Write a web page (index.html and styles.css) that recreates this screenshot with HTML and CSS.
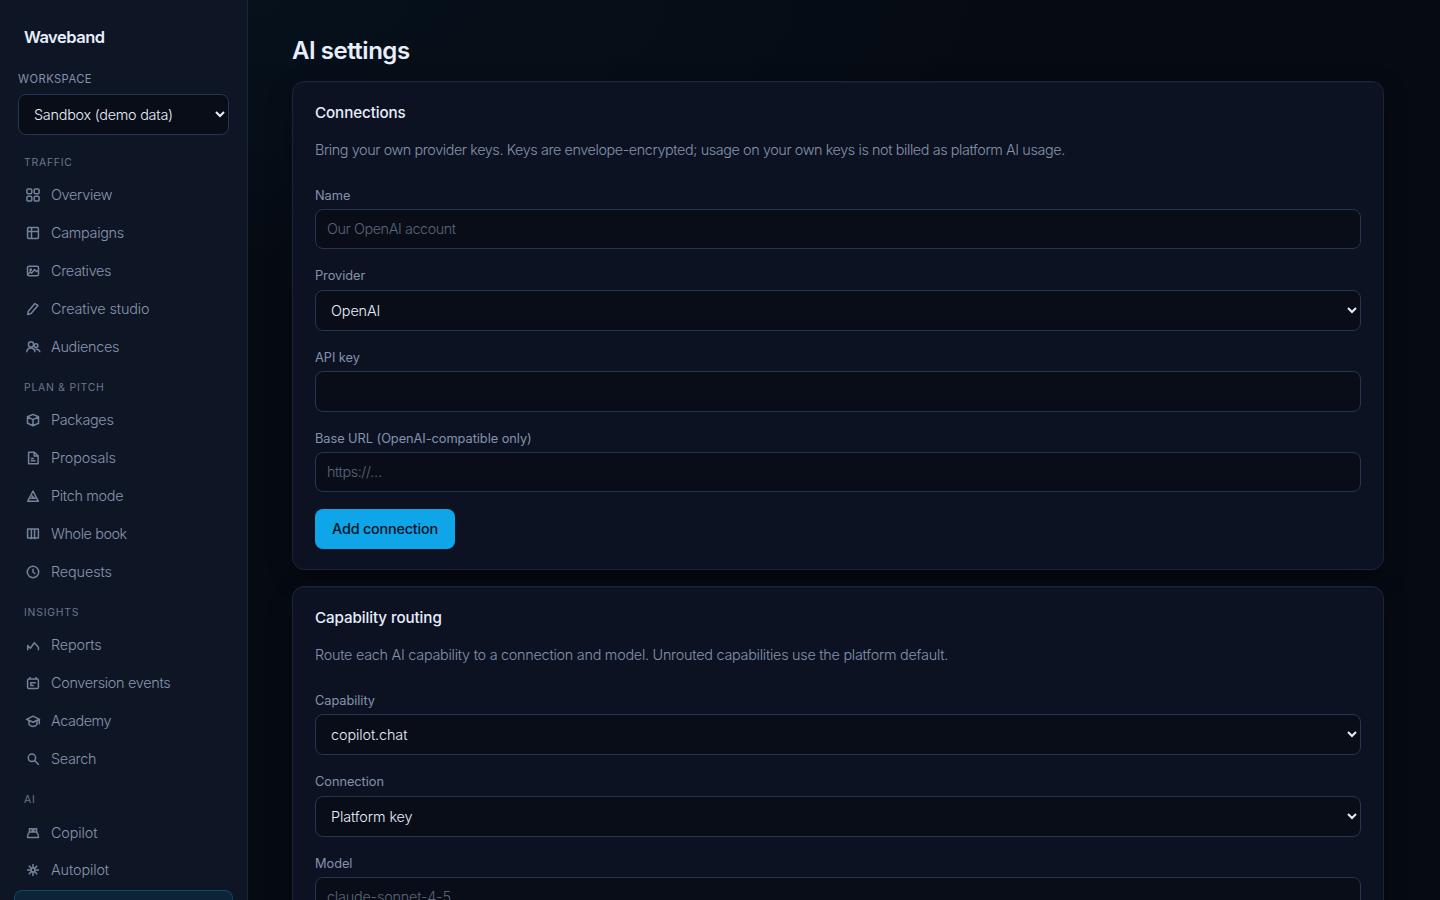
FILE: index.html
```html
<!DOCTYPE html>
<html lang="en">
<head>
<meta charset="utf-8">
<title>AI settings · Waveband</title>
<link rel="stylesheet" href="styles.css">
</head>
<body>
<div class="app">
  <aside class="sidebar">
    <div class="brand">Waveband</div>
    <label class="ws-label" for="ws">Workspace</label>
    <select class="control ws-select" id="ws"><option>Sandbox (demo data)</option></select>
    <nav>
      <h2 class="group">Traffic</h2>
      <a class="item"><svg viewBox="0 0 16 16"><rect x="1.900" y="1.900" width="4.900" height="4.900" rx="1.200"/><rect x="9.200" y="1.900" width="4.900" height="4.900" rx="1.200"/><rect x="1.900" y="9.200" width="4.900" height="4.900" rx="1.200"/><rect x="9.200" y="9.200" width="4.900" height="4.900" rx="1.200"/></svg><span>Overview</span></a>
      <a class="item"><svg viewBox="0 0 16 16"><rect x="2.600" y="2.600" width="10.800" height="10.800" rx=".8"/><path d="M2.600 6.500h10.800M6.500 2.600v10.800"/></svg><span>Campaigns</span></a>
      <a class="item"><svg viewBox="0 0 16 16"><rect x="2.500" y="3.300" width="11" height="9.400" rx="1.500"/><circle cx="5.700" cy="6.700" r=".7"/><path d="M3.200 11.400l2-2.600 1.500 1.300 3-3.500 1.600 2 1.900-1.200"/></svg><span>Creatives</span></a>
      <a class="item wide"><svg viewBox="0 0 16 16"><path d="M2.700 13.500l.6-3.200L9.900 2.600l3 1.800-6.800 8.200z"/></svg><span>Creative studio</span></a>
      <a class="item"><svg viewBox="0 0 16 16"><circle cx="6" cy="5.400" r="2.600"/><circle cx="11" cy="6.600" r="1.900"/><path d="M1.700 13.300c.2-2.800 1.800-4.300 4.100-4.300s4 1.500 4.200 4.300M10.600 10.400c2.400-.5 4.100.6 4.300 2.900"/></svg><span>Audiences</span></a>
      <h2 class="group">Plan &amp; pitch</h2>
      <a class="item"><svg viewBox="0 0 16 16"><path d="M8 2.400l5.500 2.400v6.400L8 13.800l-5.500-2.600V4.800zM2.500 4.800L8 7.600l5.500-2.800M8 7.600v6.200"/></svg><span>Packages</span></a>
      <a class="item wide"><svg viewBox="0 0 16 16"><path d="M3.600 2.300h5.800l3.700 3.500v8H3.600zM9.200 2.300v3.700h3.900M5.700 8.400h3.400M5.700 10.700h4.800"/></svg><span>Proposals</span></a>
      <a class="item"><svg viewBox="0 0 16 16"><path d="M8 3l5.400 10.300H2.600zM5.200 10.300h5.600M6.600 7.600L9.500 10.300"/></svg><span>Pitch mode</span></a>
      <a class="item tight"><svg viewBox="0 0 16 16"><path d="M2.600 3h10.800v8.900H2.600zM6.400 3v10.300M9.600 3v10.300M6.400 11.900h3.200"/></svg><span>Whole book</span></a>
      <a class="item wide"><svg viewBox="0 0 16 16"><circle cx="8" cy="8" r="5.700"/><path d="M8 4.700V8l2.300 2"/></svg><span>Requests</span></a>
      <h2 class="group">Insights</h2>
      <a class="item wide"><svg viewBox="0 0 16 16"><path d="M2.700 13.200V8.600l2.700 2.600 3.900-5.400 4.100 4.500v2.900"/></svg><span>Reports</span></a>
      <a class="item"><svg viewBox="0 0 16 16"><rect x="2.600" y="4.100" width="10.800" height="9.400" rx="1.300"/><path d="M5 1.900v2.200M11 1.900v2.200M5.200 7.700h5.600M5.600 10.400h3.200M5.800 7.700v2.700"/></svg><span>Conversion events</span></a>
      <a class="item tight"><svg viewBox="0 0 16 16"><path d="M1.500 6.300L8 3.100l6.500 3.200L8 9.300zM4 7.600v3.700C5.800 14.100 10.200 14.100 12 11.300V7.600M14.300 6.400v4.800"/></svg><span>Academy</span></a>
      <a class="item"><svg viewBox="0 0 16 16"><circle cx="6.900" cy="6.800" r="3.700"/><path d="M9.600 9.500l4.200 4.200"/></svg><span>Search</span></a>
      <h2 class="group last">AI</h2>
      <a class="item wide copilot"><svg viewBox="0 0 16 16"><path d="M4.500 7h7c1.300 1.300 2 2.800 2 5.500h-11c0-2.700.7-4.200 2-5.500zM4.400 7V3.700h2.800V7M8.800 7V3.700h2.800V7M7.200 5.100h1.600"/></svg><span>Copilot</span></a>
      <a class="item wide autopilot"><svg viewBox="0 0 16 16"><circle cx="8" cy="8" r="1.900"/><path d="M8 2v4M8 10v4M2 8h4M10 8h4M3.800 3.800l2.800 2.800M9.400 9.400l2.800 2.800M12.200 3.800L9.400 6.600M6.600 9.400l-2.800 2.800"/></svg><span>Autopilot</span></a>
      <a class="item active"></a>
    </nav>
  </aside>
  <main class="main">
    <h1>AI settings</h1>
    <section class="card">
      <h3>Connections</h3>
      <p class="desc">Bring your own provider keys. Keys are envelope-encrypted; usage on your own keys is not billed as platform AI usage.</p>
      <label class="field"><span>Name</span><input class="control" placeholder="Our OpenAI account"></label>
      <label class="field raised"><span>Provider</span><select class="control"><option>OpenAI</option></select></label>
      <label class="field api"><span>API key</span><input class="control" type="password"></label>
      <label class="field"><span>Base URL (OpenAI-compatible only)</span><input class="control" placeholder="https://…"></label>
      <button class="primary">Add connection</button>
    </section>
    <section class="card">
      <h3>Capability routing</h3>
      <p class="desc routing">Route each AI capability to a connection and model. Unrouted capabilities use the platform default.</p>
      <label class="field capability"><span>Capability</span><select class="control"><option>copilot.chat</option></select></label>
      <label class="field raised"><span>Connection</span><select class="control"><option>Platform key</option></select></label>
      <label class="field"><span>Model</span><input class="control model" placeholder="claude-sonnet-4-5"></label>
    </section>
  </main>
</div>
</body>
</html>
```
FILE: styles.css
```css
* { box-sizing: border-box; }
html, body { height: 100%; }
body {
  margin: 0;
  overflow: hidden;
  color: #e8eefc;
  background: radial-gradient(ellipse 900px 300px at 15% 0, #06111b, rgba(6, 17, 27, 0)), #060a12;
  font: 300 14.4px/1.5 Inter, "Liberation Sans", sans-serif;
}
.app { display: flex; height: 900px; overflow: hidden; }
.sidebar {
  flex: 0 0 248px;
  padding: 24px 14px 0;
  background: #0e1525;
  border-right: 1px solid #1a2438;
}
.brand { height: 26px; margin-left: 10px; font-size: 16.5px; line-height: 26px; font-weight: 600; letter-spacing: -0.5px; }
.ws-label {
  display: block;
  margin: 20px 4px 6px;
  font-size: 11.2px;
  line-height: 18px;
  font-weight: 400;
  letter-spacing: .45px;
  text-transform: uppercase;
  color: #8492ad;
}
.control {
  display: block;
  width: 100%;
  height: 41px;
  padding: 0 11px;
  border: 1px solid #263552;
  border-radius: 8px;
  background: #090d17;
  color: #e8eefc;
  font: 300 14.4px Inter, "Liberation Sans", sans-serif;
  letter-spacing: -0.1px;
}
select.control { padding: 0 0 0 11px; }
input.control { height: 40px; padding-bottom: 2px; letter-spacing: -0.42px; }
input.model { letter-spacing: -0.2px; }
.api input.control { height: 41px; }
.control::placeholder { color: #59647a; }
select.ws-select { width: 211px; margin-left: 4px; letter-spacing: -0.25px; }
.group {
  height: 16px;
  margin: 20px 10px 5px;
  font-size: 10.4px;
  line-height: 16px;
  font-weight: 400;
  letter-spacing: .78px;
  text-transform: uppercase;
  color: #6a778f;
}
.item + .group { margin-top: 14px; }
.group.last { margin-bottom: 6px; }
.item {
  display: flex;
  align-items: center;
  gap: 10px;
  height: 38px;
  padding: 0 11px;
  border-radius: 8px;
  color: #8795b0;
  letter-spacing: -0.3px;
}
.item.wide { letter-spacing: -0.12px; }
.item.tight { letter-spacing: -0.42px; }
.item svg { width: 16px; height: 16px; fill: none; stroke: #74829b; stroke-width: 1.5; stroke-linejoin: round; }
.item span { line-height: 22px; }
.item.copilot { height: 37px; }
.item.autopilot { margin-bottom: 1px; }
.item.active { border: 1px solid #0c4a68; background: #0d2338; }
.main { flex: 1; padding: 35px 56px 0 44px; }
h1 { margin: 0 0 14px; font-size: 24px; line-height: 32px; font-weight: 600; letter-spacing: -0.48px; }
.card {
  height: 489px;
  margin-bottom: 16px;
  padding: 20px 22px;
  border: 1px solid #1a243a;
  border-radius: 12px;
  background: #0c1222;
  box-shadow: 0 8px 24px rgba(0, 0, 0, .25), inset 0 1px 0 rgba(255, 255, 255, .03);
}
h3 { margin: 0; font-size: 15.2px; line-height: 22px; font-weight: 500; letter-spacing: -0.1px; }
.desc { margin: 14px 0 23px; line-height: 24px; color: #8492ad; letter-spacing: -0.41px; }
.desc.routing { letter-spacing: -0.26px; }
.field { display: block; height: 81px; }
.field.capability { height: 82px; }
.field span { display: block; height: 24px; padding-top: 2px; font-size: 12.8px; line-height: 18px; font-weight: 400; letter-spacing: -0.05px; color: #8492ad; }
.field.raised span { padding-top: 1px; }
.primary {
  width: 140px;
  height: 40px;
  padding: 0 0 2px;
  border: 0;
  border-radius: 8px;
  background: #0ea5e9;
  color: #04121d;
  font: 500 14.4px Inter, "Liberation Sans", sans-serif;
  letter-spacing: -0.2px;
}
```
